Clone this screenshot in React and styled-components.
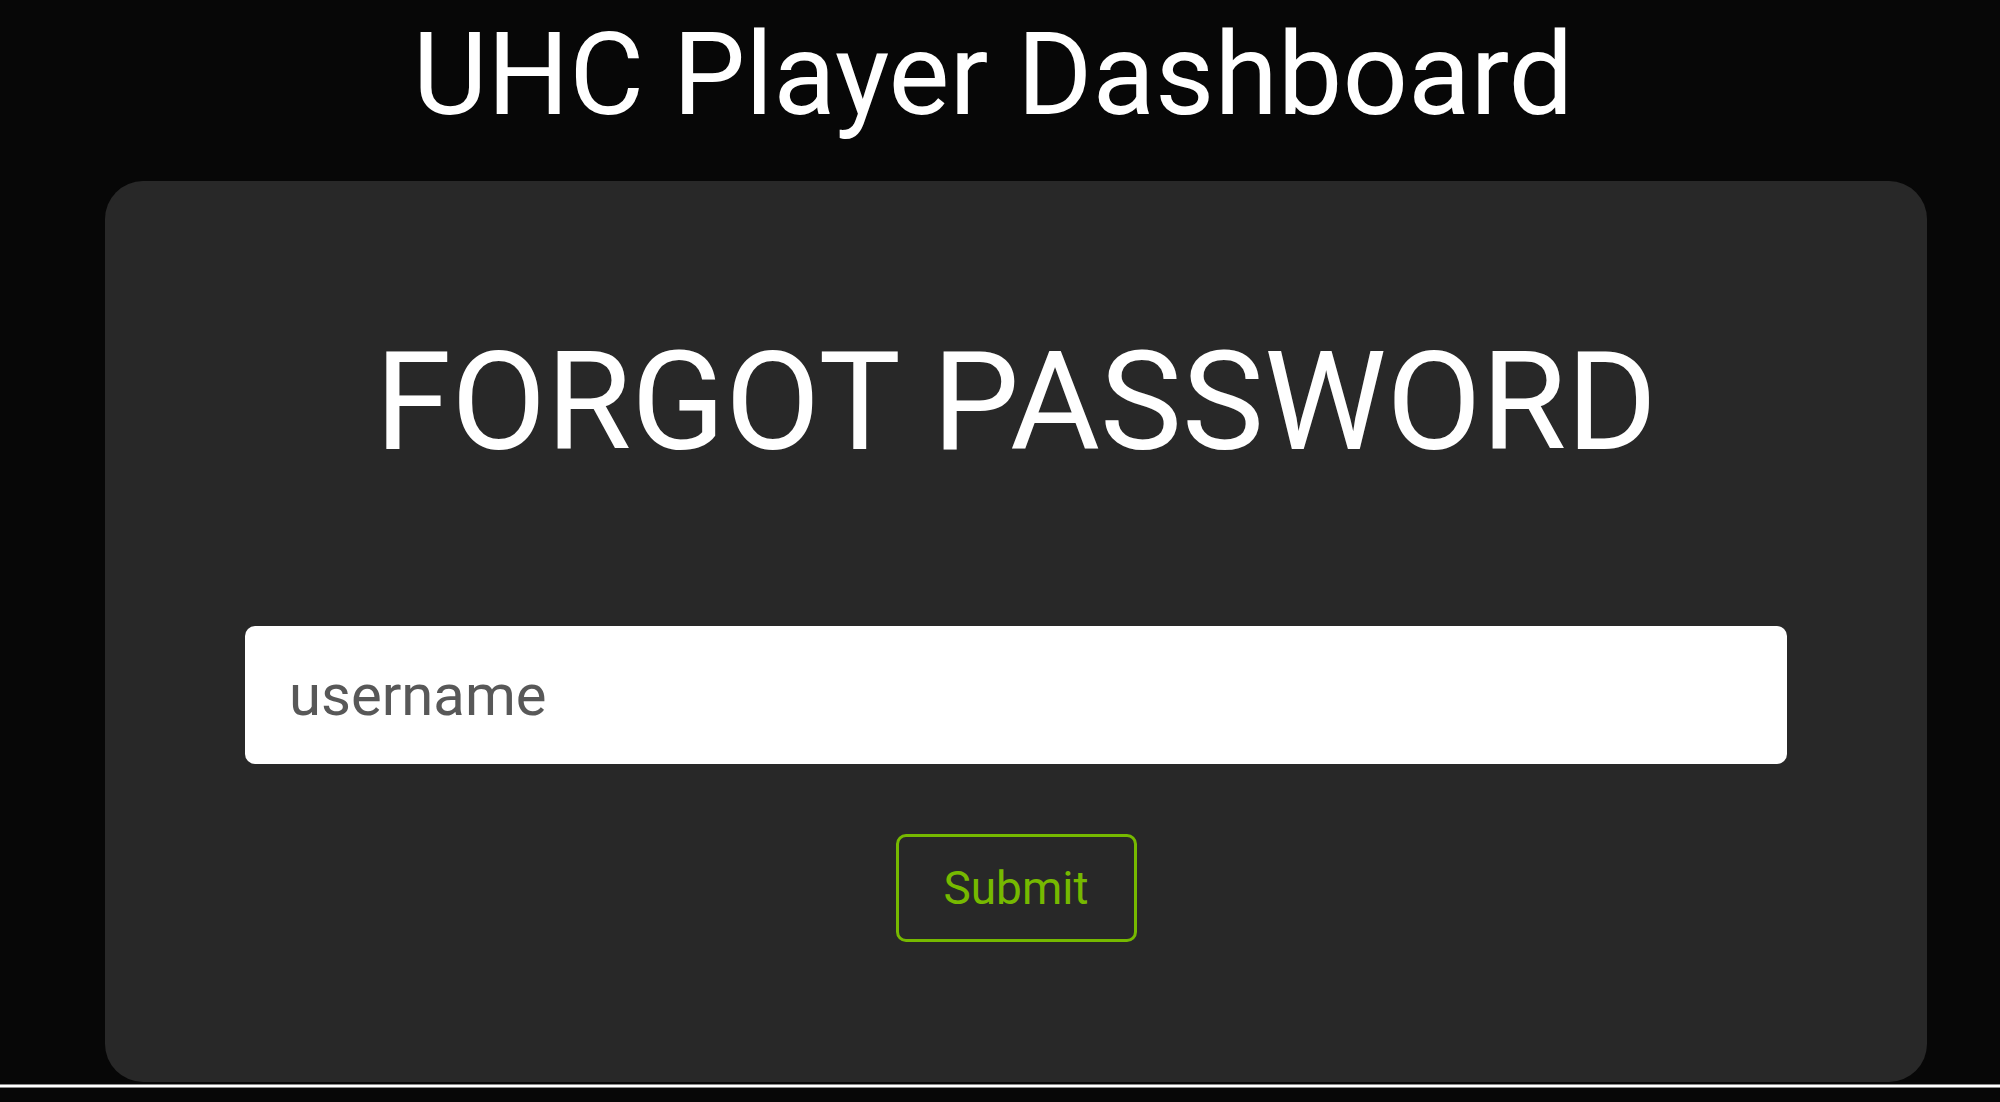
import styled, { createGlobalStyle } from "styled-components";

const GlobalStyle = createGlobalStyle`
  html, body {
    margin: 0;
    padding: 0;
    background: #070707;
    font-family: Roboto, "Liberation Sans", sans-serif;
  }
  * {
    box-sizing: border-box;
  }
`;

const ForgotPassword = () => {
  return (
    <Page>
      <GlobalStyle />
      <Title>UHC Player Dashboard</Title>
      <Card>
        <Heading>FORGOT PASSWORD</Heading>
        <Form onSubmit={(e) => e.preventDefault()}>
          <Input type="text" placeholder="username" />
          <SubmitButton type="submit">Submit</SubmitButton>
        </Form>
      </Card>
      <BottomRule />
    </Page>
  );
};

export default ForgotPassword;

const Page = styled.div`
  min-height: 1102px;
  display: flex;
  flex-direction: column;
  padding-top: 7px;
`;

const Title = styled.h1`
  margin: 0;
  padding-right: 14px;
  font-size: 115px;
  font-weight: 400;
  line-height: 136px;
  color: #ffffff;
  text-align: center;
`;

const Card = styled.div`
  margin: 38px 73px 0 105px;
  padding: 140px 140px 140px;
  background: #282828;
  border-radius: 38px;
  display: flex;
  flex-direction: column;
  align-items: center;
`;

const Heading = styled.h2`
  margin: 0 0 143px;
  font-size: 138px;
  font-weight: 400;
  line-height: 162px;
  color: #ffffff;
  text-align: center;
`;

const Form = styled.form`
  width: 100%;
  display: flex;
  flex-direction: column;
  align-items: center;
  gap: 70px;
`;

const Input = styled.input`
  width: 100%;
  height: 138px;
  padding: 0 44px;
  border: none;
  border-radius: 10px;
  background: #ffffff;
  font-family: Roboto, "Liberation Sans", sans-serif;
  font-size: 58px;
  color: #222222;
  outline: none;

  &::placeholder {
    color: #585858;
  }
`;

const SubmitButton = styled.button`
  width: 241px;
  height: 108px;
  background: transparent;
  border: 3px solid #76b900;
  border-radius: 10px;
  color: #76b900;
  font-family: Roboto, "Liberation Sans", sans-serif;
  font-size: 46px;
  cursor: pointer;
`;

const BottomRule = styled.div`
  margin-top: 2px;
  height: 4px;
  background: #ffffff;
  border-top: 1px solid #8a8a8a;
  border-bottom: 1px solid #8a8a8a;
`;
